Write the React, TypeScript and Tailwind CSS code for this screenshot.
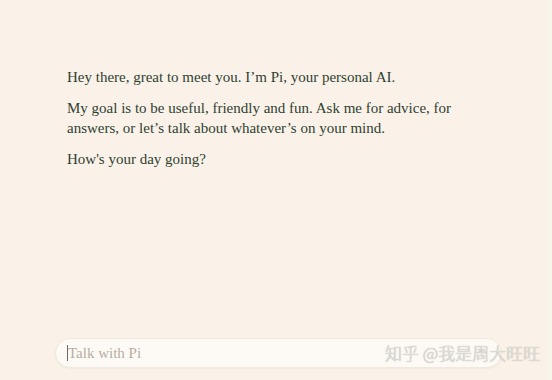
import { useState } from 'react';

const MESSAGES = [
  'Hey there, great to meet you. I’m Pi, your personal AI.',
  'My goal is to be useful, friendly and fun. Ask me for advice, for answers, or let’s talk about whatever’s on your mind.',
  "How's your day going?",
];

export default function App() {
  const [value, setValue] = useState('');

  return (
    <div className="relative flex h-[380px] w-[552px] overflow-hidden bg-[#faf2e8]">
      <div className="flex flex-1 flex-col">
        {/* Conversation */}
        <div className="flex-1 pl-[67px] pt-[67px]">
          <div
            className="flex w-[390px] flex-col gap-[11px] text-[15px] leading-[20px] text-[#2f4132]"
            style={{ fontFamily: '"Liberation Serif", "DejaVu Serif", serif' }}
          >
            {MESSAGES.map((m) => (
              <p key={m}>{m}</p>
            ))}
          </div>
        </div>

        {/* Input */}
        <div className="pb-[12px] pl-[55px] pr-[46px]">
          <div className="flex h-[30px] items-center rounded-full border border-[#f1e9de] bg-[#fdfaf5] pl-[11px] pr-[8px] shadow-[0_1px_2px_rgba(120,90,50,0.06)]">
            <div className="h-[16px] w-px bg-[#6f6a64]" />
            <input
              value={value}
              onChange={(e) => setValue(e.target.value)}
              placeholder="Talk with Pi"
              className="flex-1 bg-transparent text-[15px] text-[#2f4132] outline-none placeholder:text-[#b7aea2]"
              style={{ fontFamily: '"Liberation Serif", "DejaVu Serif", serif' }}
            />
            <button className="flex h-[22px] w-[22px] items-center justify-center rounded-full text-[#e2dbd1]">
              <svg viewBox="0 0 24 24" className="h-[14px] w-[14px]" fill="none" stroke="currentColor" strokeWidth="2.5" strokeLinecap="round" strokeLinejoin="round">
                <path d="M12 19V5M5 12l7-7 7 7" />
              </svg>
            </button>
          </div>
        </div>
      </div>

      {/* right edge strip */}
      <div className="w-[4px] bg-[#f6f5ea]" />

      {/* watermark */}
      <div
        className="absolute left-[385px] top-[342px] text-[17px] font-light leading-[22px] text-[#e4e1dd] [text-shadow:0_0_1px_#9a948e]"
        style={{ fontFamily: '"Noto Sans CJK SC", "Noto Sans", sans-serif' }}
      >
        知乎 @我是周大旺旺
      </div>
    </div>
  );
}
